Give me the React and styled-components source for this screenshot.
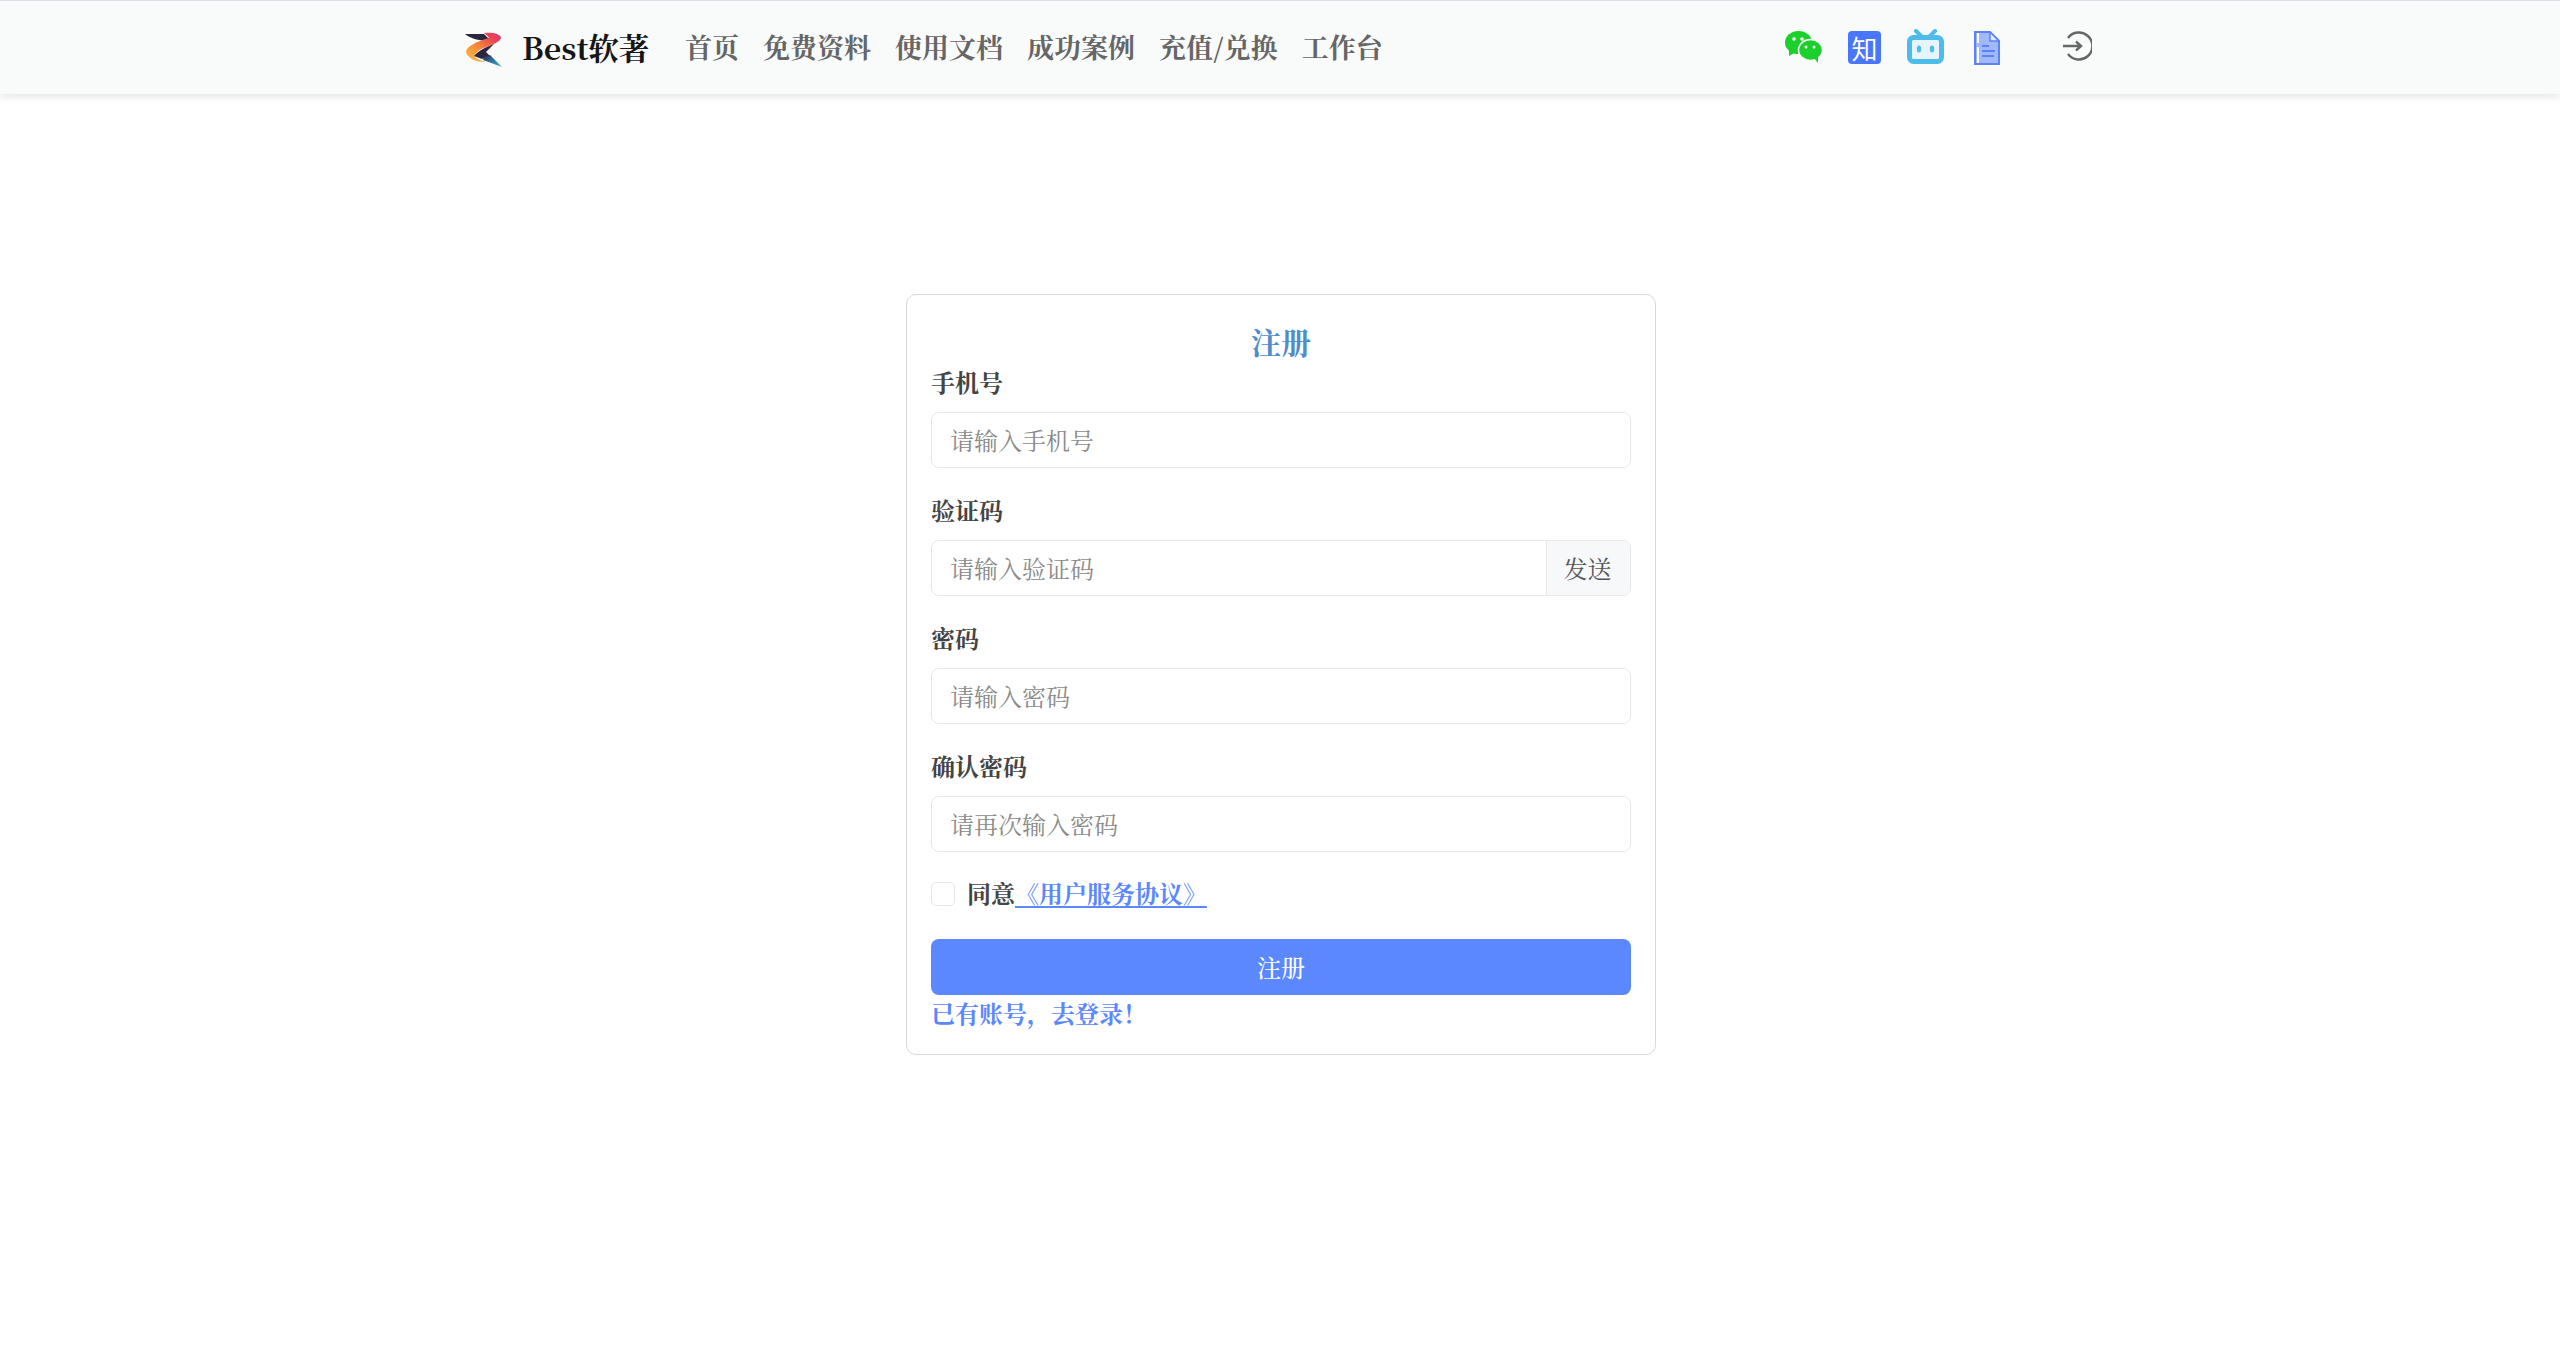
import React from "react";
import styled, { createGlobalStyle } from "styled-components";

const GlobalStyle = createGlobalStyle`
  * { box-sizing: border-box; }
  html, body { margin: 0; padding: 0; background: #fff; }
  body {
    font-family: "Noto Serif CJK SC", "Liberation Serif", "Noto Sans CJK SC", serif;
    color: #333;
  }
  input::placeholder { color: #8a8a8a; opacity: 1; }
`;

const Page = styled.div`
  min-height: 1347px;
`;

const Header = styled.header`
  height: 94px;
  display: flex;
  align-items: center;
  padding: 0 0 2px 465px;
  background: #f9fbfb;
  border-top: 1px solid #dcdfe6;
  box-shadow: 0 2px 8px rgba(0, 0, 0, 0.12);
`;

const Brand = styled.a`
  display: flex;
  align-items: center;
  width: 220px;
  color: #161616;
  font-size: 30.5px;
  font-weight: 700;
  svg { margin: 6px 19px 0 0; }
`;

const Nav = styled.nav`
  display: flex;
  gap: 24px;
  width: 1100px;
`;

const NavLink = styled.a`
  color: #666;
  font-size: 27px;
  font-weight: 700;
  white-space: nowrap;
`;

const Socials = styled.div`
  display: flex;
  align-items: center;
  gap: 26px;
`;

const ZhihuBadge = styled.span`
  width: 33px;
  height: 33px;
  margin-top: 2px;
  display: flex;
  align-items: center;
  justify-content: center;
  border-radius: 4px;
  background: #4a76fb;
  color: #fff;
  font-family: "Noto Sans CJK SC", sans-serif;
  font-size: 26px;
  line-height: 1;
`;

const DocSvg = styled.svg`
  margin: 2px 0 0 4px;
`;

const LoginIcon = styled.svg`
  margin: -2px 0 0 36px;
`;

const Content = styled.div`
  display: flex;
  justify-content: center;
  padding: 200px 0 0 2px;
`;

const Card = styled.main`
  width: 750px;
  padding: 24px;
  border: 1px solid #d9d9d9;
  border-radius: 10px;
  background: #fff;
`;

const Title = styled.h1`
  margin: 0;
  height: 45px;
  line-height: 44px;
  text-align: center;
  color: #4e8ccb;
  font-size: 30px;
  font-weight: 700;
`;

const Field = styled.div`
  margin-bottom: 24px;
`;

const Label = styled.label`
  display: block;
  height: 36px;
  margin-bottom: 12px;
  line-height: 36px;
  color: #444;
  font-size: 24px;
  font-weight: 700;
`;

const InputGroup = styled.div`
  display: flex;
  height: 56px;
  border: 1px solid #e6e6e6;
  border-radius: 8px;
  overflow: hidden;
`;

const TextInput = styled.input`
  flex: 1;
  min-width: 0;
  height: 100%;
  padding: 0 18px 2px;
  border: 0;
  outline: none;
  background: #fff;
  color: #333;
  font-family: inherit;
  font-size: 24px;
`;

const Addon = styled.button`
  width: 84px;
  padding: 0 2px 2px 0;
  border: 0;
  border-left: 1px solid #e6e6e6;
  background: #f7f8fa;
  color: #555;
  font-family: inherit;
  font-size: 24px;
`;

const AgreeRow = styled.div`
  display: flex;
  align-items: center;
  height: 36px;
  margin-bottom: 27px;
  color: #444;
  font-size: 24px;
  line-height: 34px;
  font-weight: 700;
`;

const Check = styled.span`
  width: 24px;
  height: 24px;
  margin-right: 12px;
  border: 1px solid #e6e6e6;
  border-radius: 5px;
`;

const AgreeText = styled.span`
  margin-top: -2px;
`;

const AgreeLink = styled.a`
  color: #5b88ff;
  text-decoration: underline;
  text-underline-offset: 3px;
`;

const Submit = styled.button`
  display: block;
  width: 100%;
  height: 56px;
  padding: 0 0 2px;
  border: 0;
  border-radius: 8px;
  background: #5b88ff;
  color: #fff;
  font-family: inherit;
  font-size: 24px;
  font-weight: 500;
`;

const LoginLink = styled.a`
  display: block;
  height: 35px;
  line-height: 36px;
  color: #5b88ff;
  font-size: 24px;
  font-weight: 700;
`;

const Logo = () => (
  <svg width="38" height="36" viewBox="0 0 38 36">
    <defs>
      <linearGradient id="zBody" x1="0" y1="1" x2="1" y2="0">
        <stop offset="0" stopColor="#fdc23e" />
        <stop offset="0.45" stopColor="#f6863a" />
        <stop offset="0.8" stopColor="#ea3f55" />
        <stop offset="1" stopColor="#d83a7c" />
      </linearGradient>
      <linearGradient id="zTail" x1="0" y1="0" x2="1" y2="1">
        <stop offset="0" stopColor="#2b2540" />
        <stop offset="0.45" stopColor="#2f6f9c" />
        <stop offset="1" stopColor="#39b6ea" />
      </linearGradient>
    </defs>
    <path d="M0 2 L19 2 L24 7 L20 9 C12 8 5 6 0 2 Z" fill="#2b2540" />
    <path d="M19 1 C28 0 36 2 36 6 C35 10 27 13 21 15 C15 17 11 20 9 24 C11 27 16 28 20 30 C12 30 3 27 1 20 C1 15 10 10 24 6 C23 4 21 3 19 1 Z" fill="url(#zBody)" />
    <path d="M9 24 C13 19 21 15 29 12 L21 20 L25 24 L17 27 Z" fill="#2b2540" />
    <path d="M19 25 L25 23 L37 35 L18 28 Z" fill="url(#zTail)" />
  </svg>
);

const WechatIcon = () => (
  <svg width="37" height="32" viewBox="0 0 37 32">
    <ellipse cx="13.5" cy="11.5" rx="13.5" ry="11.5" fill="#1bd02c" />
    <path d="M4 19 L4 25 L11 21 Z" fill="#1bd02c" />
    <ellipse cx="25.5" cy="19" rx="12" ry="10.5" fill="#1bd02c" stroke="#f9fbfb" strokeWidth="1.5" />
    <path d="M29 27 L33 32 L33 25 Z" fill="#1bd02c" />
    <circle cx="9" cy="8" r="1.8" fill="#f9fbfb" />
    <circle cx="17" cy="8" r="1.8" fill="#f9fbfb" />
    <circle cx="21" cy="16" r="1.5" fill="#f9fbfb" />
    <circle cx="29" cy="16" r="1.5" fill="#f9fbfb" />
  </svg>
);

const BiliIcon = () => (
  <svg width="37" height="35" viewBox="0 0 37 35">
    <path d="M9 2 L15 8 M28 2 L22 8" stroke="#4dbce9" strokeWidth="4" strokeLinecap="round" />
    <rect x="2.5" y="8.5" width="32" height="24" rx="4" fill="#e6f5fb" stroke="#4dbce9" strokeWidth="5" />
    <ellipse cx="12" cy="20" rx="2.2" ry="3.6" fill="#4dbce9" />
    <ellipse cx="25" cy="20" rx="2.2" ry="3.6" fill="#4dbce9" />
  </svg>
);

const DocIcon = () => (
  <DocSvg width="26" height="34" viewBox="0 0 26 34">
    <path d="M1 1 H16 L25 10 V33 H1 Z" fill="#a0b9fb" stroke="#5b82fb" strokeWidth="2" />
    <path d="M16 1 V10 H25 Z" fill="#e3eafd" stroke="#5b82fb" strokeWidth="1.5" />
    <path d="M4 2 V12 M4 16 V32" stroke="#fff" strokeWidth="2" />
    <path d="M8 15 H15 M8 20 H21 M8 25 H20" stroke="#5b82fb" strokeWidth="1.8" />
  </DocSvg>
);

const NAV_ITEMS = ["首页", "免费资料", "使用文档", "成功案例", "充值/兑换", "工作台"];

const App = () => {
  return (
    <Page>
      <GlobalStyle />
      <Header>
        <Brand>
          <Logo />
          Best软著
        </Brand>
        <Nav>
          {NAV_ITEMS.map((item) => (
            <NavLink key={item}>{item}</NavLink>
          ))}
        </Nav>
        <Socials>
          <WechatIcon />
          <ZhihuBadge>知</ZhihuBadge>
          <BiliIcon />
          <DocIcon />
          <LoginIcon width="30" height="30" viewBox="0 0 30 30" fill="none" stroke="#666" strokeWidth="2.4">
            <path d="M6 7 A13.5 13.5 0 1 1 6 23" />
            <path d="M1 15 H19 M14 10.5 L19 15 L14 19.5" />
          </LoginIcon>
        </Socials>
      </Header>
      <Content>
        <Card>
          <Title>注册</Title>
          <Field>
            <Label>手机号</Label>
            <InputGroup>
              <TextInput placeholder="请输入手机号" />
            </InputGroup>
          </Field>
          <Field>
            <Label>验证码</Label>
            <InputGroup>
              <TextInput placeholder="请输入验证码" />
              <Addon>发送</Addon>
            </InputGroup>
          </Field>
          <Field>
            <Label>密码</Label>
            <InputGroup>
              <TextInput placeholder="请输入密码" />
            </InputGroup>
          </Field>
          <Field>
            <Label>确认密码</Label>
            <InputGroup>
              <TextInput placeholder="请再次输入密码" />
            </InputGroup>
          </Field>
          <AgreeRow>
            <Check />
            <AgreeText>
              同意<AgreeLink>《用户服务协议》</AgreeLink>
            </AgreeText>
          </AgreeRow>
          <Submit>注册</Submit>
          <LoginLink>已有账号，去登录！</LoginLink>
        </Card>
      </Content>
    </Page>
  );
};

export default App;
